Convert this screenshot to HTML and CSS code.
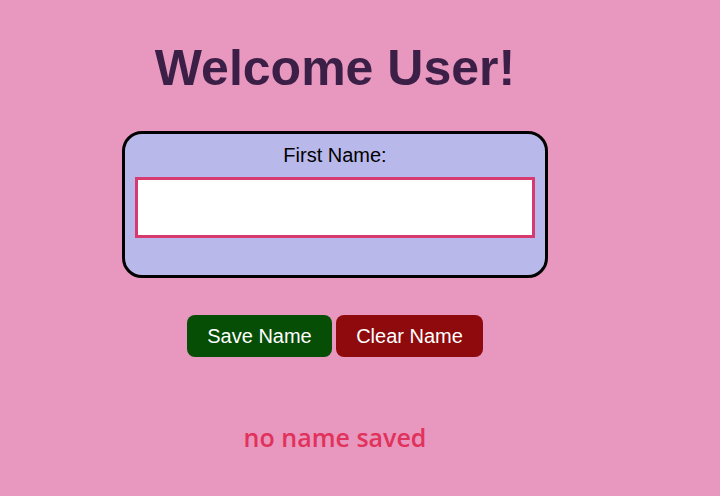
FILE: index.html
```html
<!DOCTYPE html>
<html>
<head>
<meta charset="utf-8">
<link rel="stylesheet" href="styles.css">
</head>
<body>
<main class="app">
  <h1 class="title">Welcome User!</h1>
  <div class="card">
    <label class="label" for="first">First Name:</label>
    <input class="field" id="first" type="text">
  </div>
  <div class="actions">
    <button class="btn btn-save">Save Name</button>
    <button class="btn btn-clear">Clear Name</button>
  </div>
  <p class="status">no name saved</p>
</main>
</body>
</html>
```

FILE: styles.css
```css
html, body {
  margin: 0;
  background: #e897bf;
}
body {
  padding: 8px;
  font-family: "Liberation Sans", Arial, sans-serif;
}
.app {
  width: 654px;
  display: flex;
  flex-direction: column;
  align-items: center;
}
.title {
  margin: 31px 0 0;
  font-size: 50px;
  font-weight: bold;
  color: #3b1f47;
  line-height: 58px;
}
.card {
  margin-top: 34px;
  width: 426px;
  height: 147px;
  box-sizing: border-box;
  border: 3px solid #000;
  border-radius: 20px;
  background: #b9b8ea;
  display: flex;
  flex-direction: column;
  align-items: center;
  padding-top: 10px;
}
.label {
  font-size: 20px;
  line-height: 23px;
  color: #000;
}
.field {
  margin-top: 10px;
  width: 400px;
  height: 61px;
  box-sizing: border-box;
  border: 3px solid #d63a6e;
  background: #fff;
  outline: none;
  padding: 0;
}
.actions {
  margin-top: 37px;
  display: flex;
  gap: 4px;
}
.btn {
  height: 42px;
  border: none;
  border-radius: 8px;
  color: #fff;
  font-family: "Liberation Sans", Arial, sans-serif;
  font-size: 20px;
  padding: 0 20px;
}
.btn-save { background: #064d05; width: 145px; }
.btn-clear { background: #8e0a0d; width: 147px; }
.status {
  margin: 63px 0 0;
  font-family: "Open Sans", sans-serif;
  font-weight: 600;
  font-size: 25px;
  color: #e0325a;
}
```
